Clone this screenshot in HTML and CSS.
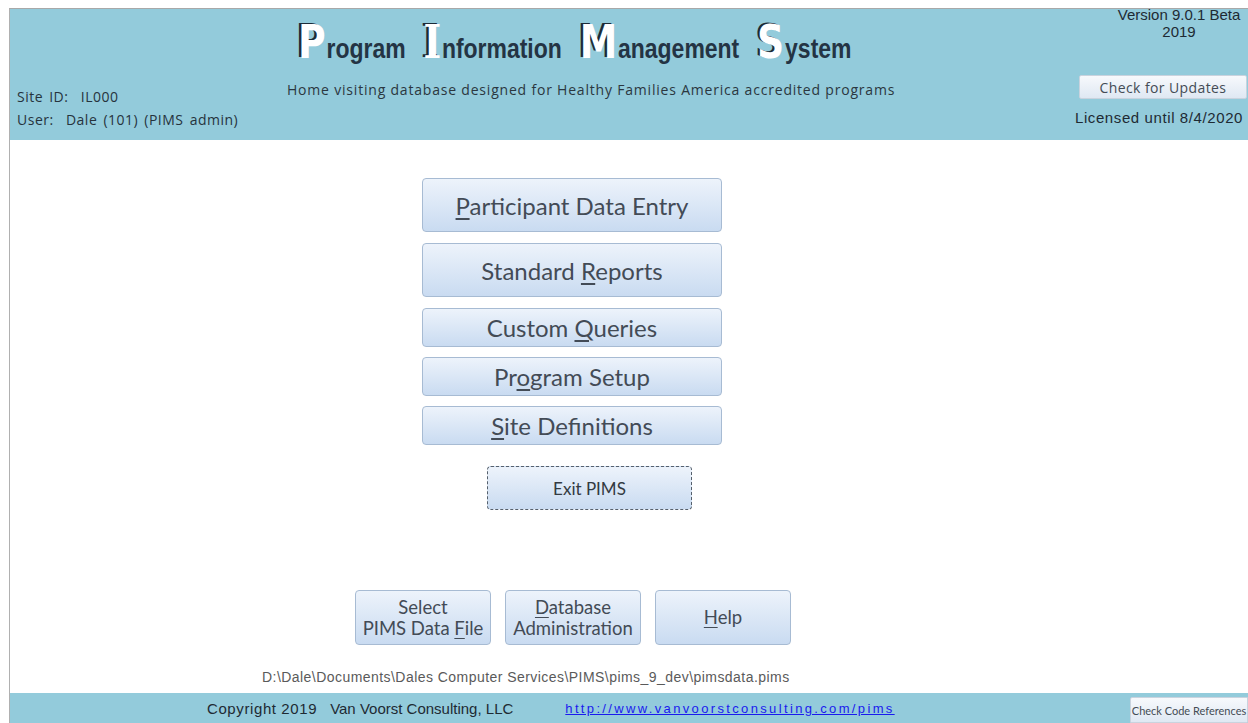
FILE: index.html
```html
<!DOCTYPE html>
<html>
<head>
<meta charset="utf-8">
<title>PIMS</title>
<link rel="stylesheet" href="styles.css">
</head>
<body>
<div class="window">
  <header class="header">
    <div class="info">
      <div class="info-line">Site ID:&nbsp; IL000</div>
      <div class="info-line">User:&nbsp; Dale (101) (PIMS admin)</div>
    </div>
    <div class="brand">
      <h1 class="title"><span class="cap">P</span>rogram <span class="cap cap-serif">I</span>nformation <span class="cap">M</span>anagement <span class="cap">S</span>ystem</h1>
      <p class="subtitle">Home visiting database designed for Healthy Families America accredited programs</p>
    </div>
    <div class="version">
      <div class="ver">Version 9.0.1 Beta</div>
      <div class="ver">2019</div>
      <button class="small-btn updates">Check for Updates</button>
      <div class="licensed">Licensed until 8/4/2020</div>
    </div>
  </header>

  <main class="main">
    <nav class="menu">
      <button class="btn big"><u>P</u>articipant Data Entry</button>
      <button class="btn big">Standard <u>R</u>eports</button>
      <button class="btn mid">Custom <u>Q</u>ueries</button>
      <button class="btn mid">Pr<u>o</u>gram Setup</button>
      <button class="btn mid"><u>S</u>ite Definitions</button>
      <button class="btn exit">Exit PIMS</button>
    </nav>
    <div class="tools">
      <button class="btn tool">Select<br>PIMS Data <u>F</u>ile</button>
      <button class="btn tool"><u>D</u>atabase<br>Administration</button>
      <button class="btn tool"><u>H</u>elp</button>
    </div>
    <div class="path">D:\Dale\Documents\Dales Computer Services\PIMS\pims_9_dev\pimsdata.pims</div>
  </main>

  <footer class="footer">
    <span class="copy">Copyright 2019</span>
    <span class="company">Van Voorst Consulting, LLC</span>
    <a class="link" href="#">http://www.vanvoorstconsulting.com/pims</a>
    <button class="small-btn refs">Check Code References</button>
  </footer>
</div>
</body>
</html>
```

FILE: styles.css
```css
html, body {
  margin: 0;
  padding: 0;
  background: #ffffff;
}

body {
  width: 1248px;
  height: 723px;
  overflow: hidden;
}

.window {
  margin: 8px 0 0 9px;
  height: 715px;
  border-top: 1px solid #a8a8a8;
  border-left: 1px solid #b0b0b0;
  display: flex;
  flex-direction: column;
  box-sizing: border-box;
}

/* ---------- header band ---------- */
.header {
  height: 131px;
  background: #93cbdb;
  display: flex;
  flex-shrink: 0;
}

.info {
  width: 260px;
  padding-top: 78px;
  padding-left: 7px;
  font-family: "Open Sans", "DejaVu Sans", sans-serif;
  font-size: 14px;
  letter-spacing: 0.5px;
  word-spacing: 2px;
  color: #26333d;
  box-sizing: border-box;
}

.info-line {
  height: 23px;
  line-height: 20px;
}

.brand {
  flex: 1;
  padding-top: 10px;
}

/* the whole title line is set in a narrowed face */
.title {
  margin: 0 0 0 28px;
  font-family: "Liberation Sans", Arial, sans-serif;
  font-weight: bold;
  font-size: 28px;
  line-height: 46px;
  word-spacing: 14px;
  color: #243444;
  white-space: nowrap;
  transform: scaleX(0.82);
  transform-origin: left center;
}

.cap {
  font-family: "DejaVu Sans", sans-serif;
  font-weight: bold;
  font-size: 46px;
  color: #ffffff;
  text-shadow: -3px -1px 0 #1c2a36;
  margin-right: 1px;
}

.cap-serif {
  font-family: "DejaVu Serif", serif;
}

.subtitle {
  margin: 8px 0 0 17px;
  font-family: "Open Sans", "DejaVu Sans", sans-serif;
  font-size: 14px;
  letter-spacing: 0.8px;
  color: #2b3740;
  white-space: nowrap;
}

.version {
  width: 178px;
  margin-top: -3px;
  display: flex;
  flex-direction: column;
  align-items: center;
  font-family: "Liberation Sans", Arial, sans-serif;
  font-size: 15px;
  color: #1e2a33;
}

.ver {
  line-height: 17px;
  padding-left: 40px;
}

.small-btn {
  font-family: "Open Sans", "DejaVu Sans", sans-serif;
  color: #444c55;
  background: linear-gradient(#f7f9fc, #dfe8f3);
  border: 1px solid #c9d3de;
  border-radius: 2px;
  padding: 0;
  cursor: pointer;
  white-space: nowrap;
}

.updates {
  margin-top: 35px;
  margin-left: 8px;
  width: 168px;
  height: 24px;
  font-size: 14px;
  letter-spacing: 0.4px;
}

.licensed {
  margin-top: 10px;
  line-height: 17px;
  letter-spacing: 0.6px;
}

/* ---------- main menu ---------- */
.main {
  flex: 1;
  display: flex;
  flex-direction: column;
  align-items: flex-start;
}

.menu {
  margin-top: 38px;
  margin-left: 412px;
  width: 300px;
  display: flex;
  flex-direction: column;
  align-items: flex-start;
}

.btn {
  font-family: "Lato", "Open Sans", sans-serif;
  color: #434b56;
  background: linear-gradient(#edf3fb, #c9dbf1);
  border: 1px solid #a7bbd3;
  border-radius: 4px;
  padding: 0;
  cursor: pointer;
  box-sizing: border-box;
}

.btn u {
  text-underline-offset: 3px;
}

.big {
  width: 300px;
  height: 54px;
  margin-bottom: 11px;
  font-size: 24px;
}

.mid {
  width: 300px;
  height: 39px;
  margin-bottom: 10px;
  font-size: 24px;
}

.exit {
  width: 205px;
  height: 44px;
  margin-top: 11px;
  margin-left: 65px;
  font-size: 17px;
  color: #333a42;
  border: 1px dashed #56606c;
}

.tools {
  margin-top: 80px;
  margin-left: 345px;
  display: flex;
  gap: 14px;
}

.tool {
  width: 136px;
  height: 55px;
  font-size: 18.5px;
  line-height: 21px;
}

.path {
  margin-top: 24px;
  margin-left: 252px;
  font-family: "Liberation Sans", Arial, sans-serif;
  font-size: 14px;
  letter-spacing: 0.45px;
  color: #5a5a5a;
}

/* ---------- footer band ---------- */
.footer {
  height: 30px;
  background: #93cbdb;
  display: flex;
  align-items: center;
  font-family: "Liberation Sans", Arial, sans-serif;
  font-size: 15px;
  color: #1e2a33;
  flex-shrink: 0;
}

.copy {
  margin-left: 197px;
  letter-spacing: 0.6px;
}

.company {
  margin-left: 13px;
}

.link {
  margin-left: 52px;
  font-size: 13px;
  letter-spacing: 2.35px;
  color: #1a1aee;
  text-decoration: underline;
}

.refs {
  margin-left: auto;
  align-self: flex-end;
  width: 118px;
  height: 26px;
  font-family: "Lato", "Open Sans", sans-serif;
  font-size: 11px;
  border-radius: 2px 0 0 0;
}
```
